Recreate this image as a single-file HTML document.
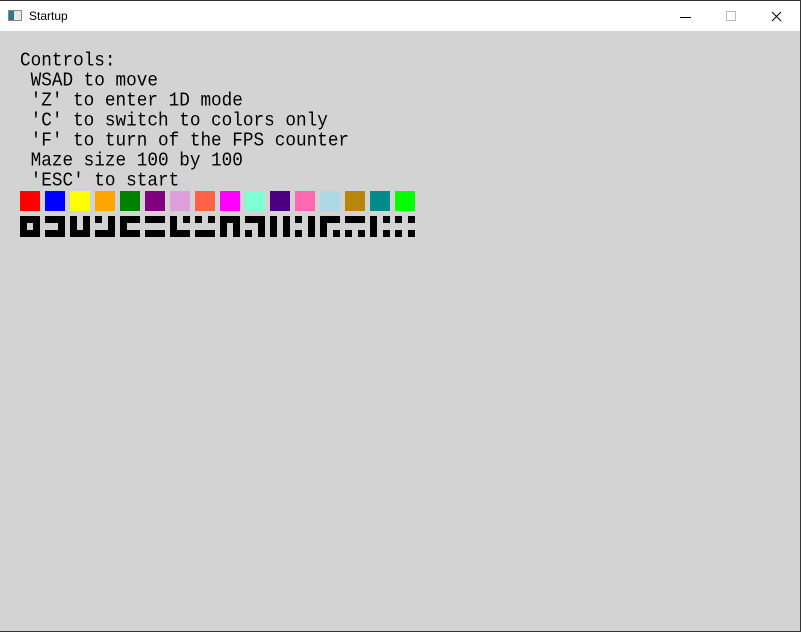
<!DOCTYPE html>
<html><head><meta charset="utf-8"><style>
html,body{margin:0;padding:0;}
body{width:801px;height:632px;position:relative;overflow:hidden;background:#d3d3d3;font-family:"Liberation Sans",sans-serif;}
#bar{position:absolute;left:0;top:0;width:801px;height:31px;background:#fff;border-top:1px solid #333;box-sizing:border-box;}
#title{position:absolute;left:29px;top:8px;font-size:12px;color:#000;}
#icon{position:absolute;left:8px;top:9px;width:14px;height:11px;border:1px solid #888;box-sizing:border-box;background:linear-gradient(90deg,#2a7a8a 0 5px,#dfe9ee 5px);}
#rb{position:absolute;right:0;top:0;width:1px;height:632px;background:#333;}
#bb{position:absolute;left:0;bottom:0;width:801px;height:1px;background:#333;}
#txt{position:absolute;left:20px;top:51px;font-family:"Liberation Mono",monospace;font-size:17.7px;line-height:18px;white-space:pre;color:#000;transform:scaleY(1.11);transform-origin:0 0;}
.sq{position:absolute;top:191px;width:20px;height:20px;}
.t{position:absolute;top:216px;width:20px;height:21px;}
.t i{position:absolute;background:#000;}
</style></head><body>
<div id="bar"><div id="icon"></div><div id="title">Startup</div>
<svg style="position:absolute;left:680px;top:10px" width="110" height="12">
<line x1="0" y1="6.5" x2="11" y2="6.5" stroke="#000" stroke-width="1"/>
<rect x="46.5" y="0.5" width="9" height="9" fill="none" stroke="#bbb"/>
<path d="M92 1 L101 10 M101 1 L92 10" stroke="#000" stroke-width="1"/>
</svg></div>
<div id="rb"></div><div id="bb"></div>
<div id="txt">Controls:
 WSAD to move
 'Z' to enter 1D mode
 'C' to switch to colors only
 'F' to turn of the FPS counter
 Maze size 100 by 100
 'ESC' to start</div>
<div id="sqs"></div>
<div id="tiles"></div>
<script>
var cols=["#ff0000","#0000ff","#ffff00","#ffa500","#008000","#800080","#dda0dd","#ff6347","#ff00ff","#7fffd4","#4b0082","#ff69b4","#add8e6","#b8860b","#008b8b","#00ff00"];
var s="";
for(var i=0;i<16;i++){s+='<div class="sq" style="left:'+(20+25*i)+'px;background:'+cols[i]+'"></div>';}
document.getElementById("sqs").innerHTML=s;
var t="";
for(var i=0;i<16;i++){
 var x=20+25*i, h='';
 h+='<i style="left:0;top:0;width:7px;height:7px"></i><i style="left:13px;top:0;width:7px;height:7px"></i><i style="left:0;top:14px;width:7px;height:7px"></i><i style="left:13px;top:14px;width:7px;height:7px"></i>';
 if(!(i&1)) h+='<i style="left:0;top:7px;width:7px;height:7px"></i>';
 if(!(i&2)) h+='<i style="left:7px;top:0;width:6px;height:7px"></i>';
 if(!(i&4)) h+='<i style="left:13px;top:7px;width:7px;height:7px"></i>';
 if(!(i&8)) h+='<i style="left:7px;top:14px;width:6px;height:7px"></i>';
 t+='<div class="t" style="left:'+x+'px">'+h+'</div>';
}
document.getElementById("tiles").innerHTML=t;
</script>
</body></html>
